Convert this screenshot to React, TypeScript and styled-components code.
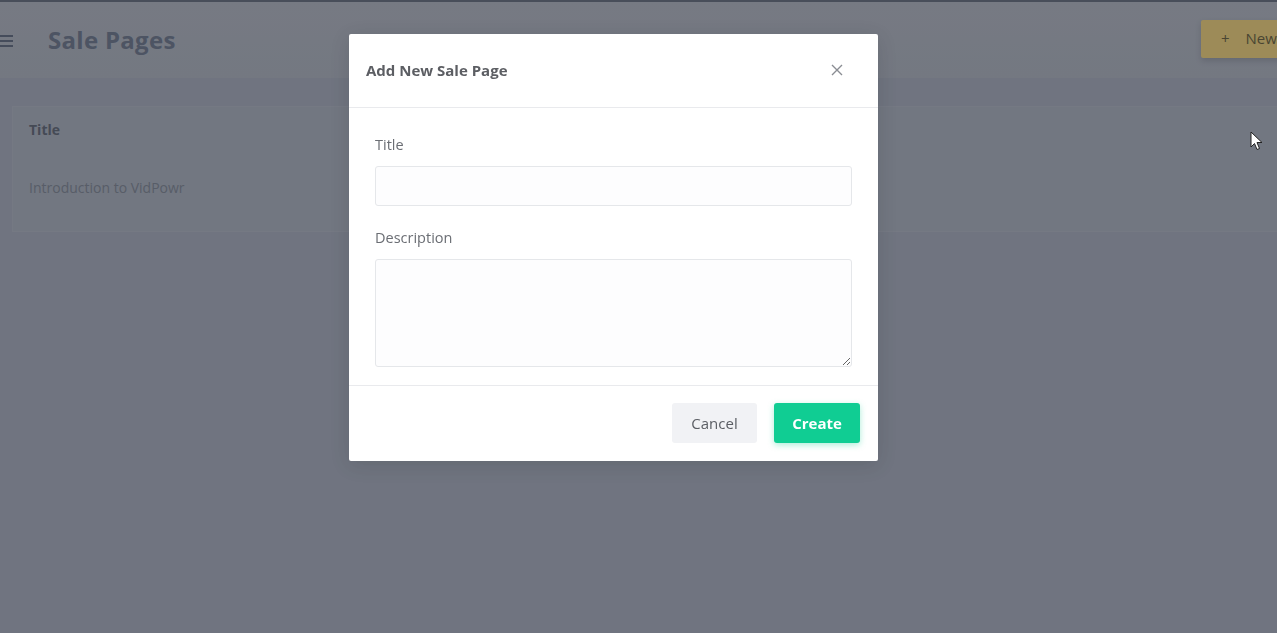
import React from "react";
import styled, { createGlobalStyle } from "styled-components";

const GlobalStyle = createGlobalStyle`
  html, body {
    margin: 0;
    padding: 0;
    height: 100%;
    overflow: hidden;
  }
  body {
    font-family: "Open Sans", "Noto Sans", sans-serif;
    background: #adb0b7;
  }
`;

const Page = styled.div`
  min-height: 633px;
  border-top: 2px solid #6c7079;
  background: #adb0b7;
  overflow: hidden;
`;

const TopBar = styled.header`
  display: flex;
  align-items: flex-start;
  justify-content: space-between;
  height: 76px;
  background: linear-gradient(#b8b9bc, #b4b6ba);
`;

const TitleGroup = styled.div`
  display: flex;
  align-items: center;
  gap: 35px;
  margin-top: 21px;
`;

const Burger = styled.span`
  display: flex;
  flex-direction: column;
  gap: 3px;
  width: 13px;
  margin-top: 2px;

  i {
    display: block;
    height: 2px;
    background: #666d7a;
  }
`;

const PageTitle = styled.h1`
  margin: 0;
  font-size: 24px;
  font-weight: 700;
  color: #737a87;
  letter-spacing: 0.3px;
`;

const NewButton = styled.button`
  display: flex;
  align-items: center;
  gap: 16px;
  flex-shrink: 0;
  height: 38px;
  width: 110px;
  margin: 18px -34px 0 0;
  padding: 0 0 2px 20px;
  border: none;
  border-radius: 2px;
  background: #f8d675;
  color: #6e6236;
  font-family: inherit;
  font-size: 15px;
  white-space: nowrap;
  box-shadow: 0 3px 6px rgba(0, 0, 0, 0.15);
`;

const Card = styled.section`
  margin: 28px 0 0 12px;
  background: #b1b4b9;
  border: 1px solid #b6b8bd;
  border-right: none;
  height: 126px;
  box-sizing: border-box;
  padding: 13px 16px;
`;

const ColHead = styled.div`
  font-size: 14px;
  font-weight: 700;
  color: #676a71;
  line-height: 20px;
`;

const RowText = styled.div`
  margin-top: 38px;
  font-size: 14px;
  color: #85898f;
  line-height: 20px;
`;

const Overlay = styled.div`
  position: fixed;
  inset: 0;
  padding-right: 50px;
  background: rgba(20, 28, 45, 0.4);
  display: flex;
  justify-content: center;
  align-items: flex-start;
`;

const Modal = styled.div`
  margin-top: 34px;
  width: 529px;
  background: #ffffff;
  border-radius: 2px;
  box-shadow: 0 4px 20px rgba(0, 0, 0, 0.12);
`;

const ModalHeader = styled.div`
  display: flex;
  align-items: center;
  justify-content: space-between;
  height: 74px;
  box-sizing: border-box;
  padding: 0 35px 1px 17px;
  border-bottom: 1px solid #e9eaed;
`;

const ModalTitle = styled.h2`
  margin: 0;
  font-size: 15px;
  font-weight: 700;
  color: #5c5e63;
`;

const CloseButton = styled.button`
  display: flex;
  padding: 0;
  border: none;
  background: none;
  color: #8a8d93;
`;

const ModalBody = styled.div`
  padding: 28px 26px 18px 26px;
`;

const Field = styled.div`
  & + & {
    margin-top: 23px;
  }
`;

const Label = styled.label`
  display: block;
  font-size: 14.5px;
  color: #6b6e74;
  line-height: 18px;
  margin-bottom: 12px;
`;

const Input = styled.input`
  display: block;
  width: 100%;
  height: 40px;
  box-sizing: border-box;
  border: 1px solid #e5e7ea;
  border-radius: 3px;
  background: #fdfdfe;
`;

const TextArea = styled.textarea`
  display: block;
  width: 100%;
  height: 108px;
  box-sizing: border-box;
  border: 1px solid #e5e7ea;
  border-radius: 3px;
  background: #fdfdfe;
  resize: vertical;
`;

const ModalFooter = styled.div`
  display: flex;
  justify-content: flex-end;
  gap: 17px;
  padding: 17px 18px 18px;
  border-top: 1px solid #e9eaed;
`;

const FooterButton = styled.button<{ $primary?: boolean }>`
  height: 40px;
  width: ${(p) => (p.$primary ? 86 : 85)}px;
  border: none;
  border-radius: 3px;
  font-family: inherit;
  font-size: 15px;
  font-weight: ${(p) => (p.$primary ? 700 : 400)};
  color: ${(p) => (p.$primary ? "#ffffff" : "#5b5e64")};
  background: ${(p) => (p.$primary ? "#10cd93" : "#f1f2f5")};
  box-shadow: ${(p) =>
    p.$primary ? "0 2px 6px rgba(16, 205, 147, 0.35)" : "none"};
`;

const Cursor = styled.svg`
  position: fixed;
  left: 1250px;
  top: 131px;
`;

export default function App() {
  return (
    <>
      <GlobalStyle />
      <Page>
        <TopBar>
          <TitleGroup>
            <Burger>
              <i />
              <i />
              <i />
            </Burger>
            <PageTitle>Sale Pages</PageTitle>
          </TitleGroup>
          <NewButton>
            <span>+</span>
            <span>New</span>
          </NewButton>
        </TopBar>
        <Card>
          <ColHead>Title</ColHead>
          <RowText>Introduction to VidPowr</RowText>
        </Card>
      </Page>
      <Overlay>
        <Modal>
          <ModalHeader>
            <ModalTitle>Add New Sale Page</ModalTitle>
            <CloseButton aria-label="Close">
              <svg width="12" height="12" viewBox="0 0 12 12">
                <path
                  d="M1 1L11 11M11 1L1 11"
                  stroke="currentColor"
                  strokeWidth="1.4"
                />
              </svg>
            </CloseButton>
          </ModalHeader>
          <ModalBody>
            <Field>
              <Label>Title</Label>
              <Input />
            </Field>
            <Field>
              <Label>Description</Label>
              <TextArea />
            </Field>
          </ModalBody>
          <ModalFooter>
            <FooterButton>Cancel</FooterButton>
            <FooterButton $primary>Create</FooterButton>
          </ModalFooter>
        </Modal>
      </Overlay>
      <Cursor width="14" height="20" viewBox="0 0 14 20">
        <path
          d="M1 1V16L4.5 12.5L7 18.5L9.5 17.5L7 11.5H12Z"
          fill="#ffffff"
          stroke="#222"
          strokeWidth="1"
          strokeLinejoin="round"
        />
      </Cursor>
    </>
  );
}
